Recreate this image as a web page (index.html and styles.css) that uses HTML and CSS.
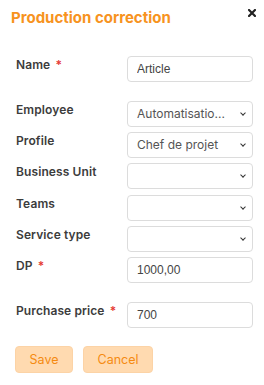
FILE: index.html
```html
<!DOCTYPE html>
<html lang="en">
<head>
    <meta charset="UTF-8">
    <meta name="viewport" content="width=device-width, initial-scale=1.0">
    <title>Production correction</title>
    <link rel="stylesheet" href="styles.css">
</head>
<body>
<div class="modal">
    <div class="modal-header">
        <h2>Production correction</h2>
        <span class="close">
            <svg width="8" height="8" viewBox="0 0 8 8"><path d="M1 1L7 7M7 1L1 7" stroke="#222" stroke-width="2.2" stroke-linecap="square"/></svg>
        </span>
    </div>

    <form class="form">
        <div class="row required">
            <label>Name <span class="req">*</span></label>
            <input type="text" value="Article">
        </div>
        <div class="row">
            <label>Employee</label>
            <div class="select"><span>Automatisatio...</span><i class="chev"></i></div>
        </div>
        <div class="row">
            <label>Profile</label>
            <div class="select"><span>Chef de projet</span><i class="chev"></i></div>
        </div>
        <div class="row">
            <label>Business Unit</label>
            <div class="select"><span></span><i class="chev"></i></div>
        </div>
        <div class="row">
            <label>Teams</label>
            <div class="select"><span></span><i class="chev"></i></div>
        </div>
        <div class="row">
            <label>Service type</label>
            <div class="select"><span></span><i class="chev"></i></div>
        </div>
        <div class="row required">
            <label>DP <span class="req">*</span></label>
            <input type="text" value="1000,00">
        </div>
        <div class="row required">
            <label>Purchase price <span class="req">*</span></label>
            <input type="text" value="700">
        </div>

        <div class="actions">
            <button type="button" class="btn btn-save">Save</button>
            <button type="button" class="btn btn-cancel">Cancel</button>
        </div>
    </form>
</div>
</body>
</html>
```

FILE: styles.css
```css
/* General Page Styling */
body {
    margin: 0;
    padding: 0;
    background: #fff;
    font-family: 'Inter', 'Open Sans', sans-serif;
}

.modal {
    width: 264px;
    height: 385px;
    box-sizing: border-box;
    padding: 8px 11px 0 0;
}

/* Header */
.modal-header {
    display: flex;
    justify-content: space-between;
    align-items: flex-start;
    padding-left: 11px;
    height: 20px;
}

.modal-header h2 {
    margin: 0;
    font-size: 15px;
    line-height: 20px;
    font-weight: 700;
    color: #f7931e;
}

.close {
    display: flex;
    margin-top: 1px;
    margin-right: -3px;
}

/* Form rows */
.form {
    margin-top: 28px;
    padding-left: 16px;
}

.row {
    display: grid;
    grid-template-columns: 111px 126px;
    margin-bottom: 5.4px;
}

.row.required {
    margin-bottom: 18.5px;
}

label {
    font-size: 12px;
    font-weight: 600;
    color: #3c3c3c;
    padding-top: 1px;
    line-height: 16px;
    letter-spacing: 0.1px;
}

.req {
    color: #e53935;
    margin-left: 2px;
}

input, .select {
    box-sizing: border-box;
    height: 26px;
    width: 126px;
    border: 1px solid #dcdcdc;
    border-radius: 4px;
    margin: 0;
}

input {
    padding: 0 9px;
    font-family: 'Liberation Sans', Arial, sans-serif;
    font-size: 12px;
    color: #444;
    outline: none;
}

.select {
    display: flex;
    align-items: center;
    justify-content: space-between;
    padding: 0 7px 0 9px;
    font-size: 12px;
    color: #555;
}

.chev {
    width: 3px;
    height: 3px;
    border-right: 1.8px solid #333;
    border-bottom: 1.8px solid #333;
    transform: rotate(45deg);
    margin-top: -2px;
}

/* Buttons */
.actions {
    display: flex;
    gap: 10px;
    margin-left: -1px;
}

.btn {
    height: 27px;
    border: 1px solid #fcd3a6;
    border-radius: 4px;
    background-color: #ffdab0;
    color: #f58a10;
    font-family: 'Inter', sans-serif;
    font-size: 12.5px;
    padding: 0;
    cursor: pointer;
}

.btn-save { width: 58px; }
.btn-cancel { width: 70px; }
```
